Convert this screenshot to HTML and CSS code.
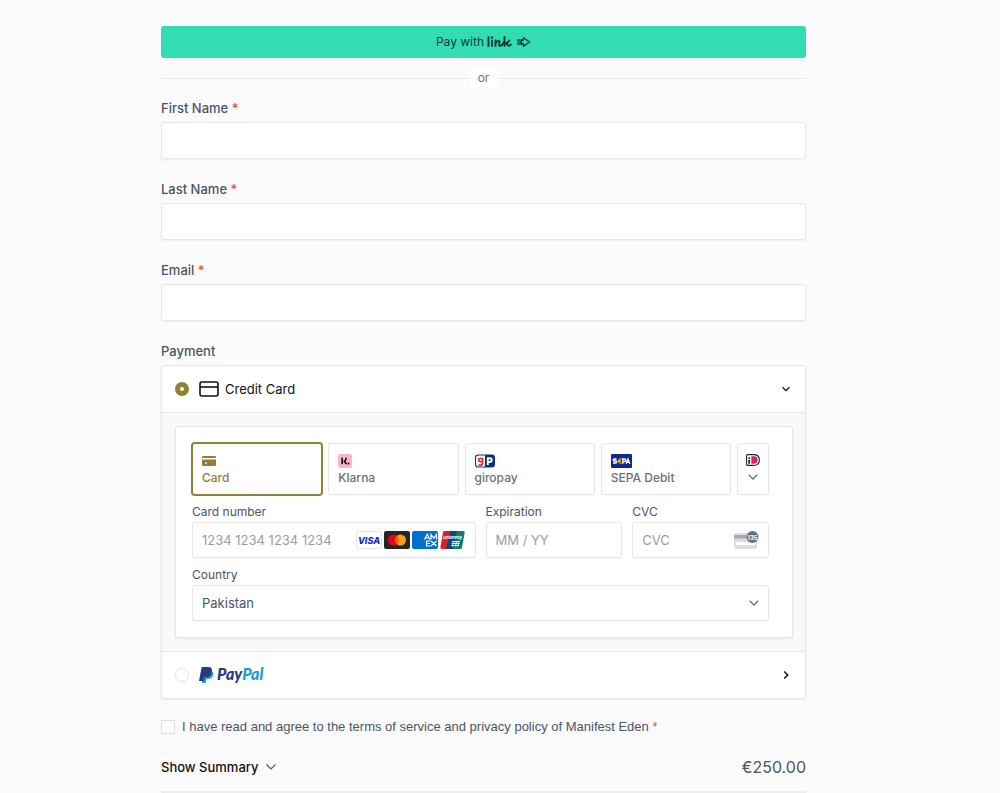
FILE: index.html
```html
<!DOCTYPE html>
<html lang="en">
<head>
    <meta charset="UTF-8">
    <meta name="viewport" content="width=device-width, initial-scale=1.0">
    <title>Checkout</title>
    <link rel="stylesheet" href="styles.css">
</head>
<body>

    <form class="checkout">
        <button type="button" class="link-button" aria-label="Pay with link">
            <span>Pay with</span>
            <svg width="44" height="14" viewBox="0 0 44 14">
                <g fill="none" stroke="#0b3b35" stroke-width="1.900" stroke-linecap="round" stroke-linejoin="round">
                    <path d="M1.500 2v9M5 5.500V11M8.500 11V5.500M8.500 8.500c1.200-2.500 4.300-4.200 4-1.500-.2 1.800-.8 4 .5 4 1.500 0 3-2 3.800-4M17.500 2v9M18 8.500c2-.3 3.500-1.300 4.200-3M19.500 8.300c.8.800 1 2.500 2.400 2.500.9 0 1.400-.5 1.900-1.300"/>
                </g>
                <circle cx="5" cy="2.500" r="1.200" fill="#0b3b35"/>
                <path d="M29.500 5l1-1h6.500v6h-6.500l-1-1 1.200-2z" fill="#0b3b35" opacity=".65"/>
                <path d="M36.500 2.800l6 4.200-6 4.200V9h-2V5h2z" fill="#33ddb3" stroke="#0b3b35" stroke-width="1.400" stroke-linejoin="round"/>
            </svg>
        </button>

        <div class="divider"><span>or</span></div>

        <div class="field">
            <label for="firstName">First Name <span class="required">*</span></label>
            <input type="text" id="firstName" required>
        </div>
        <div class="field">
            <label for="lastName">Last Name <span class="required">*</span></label>
            <input type="text" id="lastName" required>
        </div>
        <div class="field">
            <label for="email">Email <span class="required">*</span></label>
            <input type="email" id="email" required>
        </div>

        <div class="payment-title">Payment</div>
        <div class="payment">
            <div class="method">
                <input type="radio" class="radio" id="payCard" name="method" checked>
                <label for="payCard">
                    <svg width="20" height="16" viewBox="0 0 20 16" fill="none" stroke="#111" stroke-width="1.600">
                        <rect x="1" y="1" width="18" height="14" rx="2"/>
                        <path d="M1 6h18"/>
                    </svg>
                    Credit Card
                </label>
                <svg class="chevron" width="10" height="10" viewBox="0 0 10 10" fill="none" stroke="#111" stroke-width="1.300">
                    <path d="M1.500 3.200L5 6.700l3.500-3.500"/>
                </svg>
            </div>

            <div class="method-body">
                <div class="card-panel">
                    <div class="tabs">
                        <button type="button" class="tab active">
                            <svg width="14" height="14" viewBox="0 0 14 14" fill="#8f8033">
                                <path d="M0 3.200Q0 2 1.200 2h11.600Q14 2 14 3.200V4H0z"/>
                                <path d="M0 5.500h14v5.300q0 1.200-1.200 1.200H1.200Q0 12 0 10.800zM3 8.500v1.300h2V8.500z" fill-rule="evenodd"/>
                            </svg>
                            <span>Card</span>
                        </button>
                        <button type="button" class="tab">
                            <svg width="14" height="14" viewBox="0 0 14 14">
                                <rect width="14" height="14" rx="2" fill="#feb4c7"/>
                                <path d="M3.300 3.800H5v6.500H3.300zM7.300 3.800H9c0 1.400-.6 2.500-1.600 3.300l2.200 3.200H7.500L5.200 7.100c1.300-.8 2.100-1.900 2.100-3.300z" fill="#17120f"/>
                                <circle cx="10.600" cy="9.500" r=".9" fill="#17120f"/>
                            </svg>
                            <span>Klarna</span>
                        </button>
                        <button type="button" class="tab">
                            <svg width="20" height="14" viewBox="0 0 20 14">
                                <rect y=".5" width="20" height="13" rx="3" fill="#0a3270"/>
                                <path d="M3.500 1.500H10v11H3.500Q1 12.500 1 10V4Q1 1.500 3.500 1.500z" fill="#fff"/>
                                <path d="M7.500 3.700v5.800q0 1.600-1.600 1.600H3.500M7.300 4.500H5Q3.700 4.500 3.700 6T5 7.700h2.300" fill="none" stroke="#e3272e" stroke-width="1.700"/>
                                <path d="M12.800 11V4.200h2q2 0 2 1.900t-2 1.900h-2" fill="none" stroke="#fff" stroke-width="1.900"/>
                            </svg>
                            <span>giropay</span>
                        </button>
                        <button type="button" class="tab">
                            <svg width="21" height="14" viewBox="0 0 21 14">
                                <rect width="21" height="14" rx="1" fill="#10298e"/>
                                <g fill="none" stroke="#fff" stroke-width="1.400">
                                    <path d="M5.500 5H3.300Q2.200 5 2.200 6T3.300 7h1.300q1.100 0 1.100 1T4.600 9H2"/>
                                    <path d="M11.800 9.700V5h1.500q1.300 0 1.300 1.300t-1.300 1.300h-1.500M15 9.700L16.900 5l1.900 4.700M15.800 8.300h2.400"/>
                                </g>
                                <path d="M10.600 4.800Q7.600 4 7.600 7t3 2.200M6.600 6.400h3.400M6.600 7.700h3.200" fill="none" stroke="#ffbe00" stroke-width="1"/>
                            </svg>
                            <span>SEPA Debit</span>
                        </button>
                        <button type="button" class="tab more" aria-label="More payment methods">
                            <svg width="14" height="12" viewBox="0 0 14 12">
                                <path d="M1.700.6h5.800Q13.400.6 13.400 6t-5.900 5.400H1.700q-1.100 0-1.100-1V1.600q0-1 1.100-1z" fill="#fff" stroke="#222" stroke-width="1.100"/>
                                <path d="M5.300 2.300h2.500Q11.700 2.300 11.700 6t-3.900 3.700H5.300z" fill="#e0206f"/>
                                <circle cx="3.200" cy="4.200" r="1" fill="#222"/>
                                <path d="M2.300 6h1.800v3.700H2.300z" fill="#222"/>
                            </svg>
                            <svg width="10" height="6" viewBox="0 0 10 6" fill="none" stroke="#6d6e78" stroke-width="1.300">
                                <path d="M.8.800L5 5 9.200.800"/>
                            </svg>
                        </button>
                    </div>

                    <div class="card-fields">
                        <div class="card-field wide">
                            <label for="cardNumber">Card number</label>
                            <div class="card-input">
                                <input type="text" id="cardNumber" placeholder="1234 1234 1234 1234">
                                <span class="brands">
                                    <svg width="26" height="18" viewBox="0 0 26 18">
                                        <rect x=".5" y=".5" width="25" height="17" rx="2" fill="#fff" stroke="#e3e5e8"/>
                                        <text x="13" y="12.500" text-anchor="middle" class="brand-visa">VISA</text>
                                    </svg>
                                    <svg width="26" height="18" viewBox="0 0 26 18">
                                        <rect width="26" height="18" rx="2" fill="#252525"/>
                                        <circle cx="9.500" cy="9" r="5.500" fill="#eb001b"/>
                                        <circle cx="16.500" cy="9" r="5.500" fill="#f79e1b"/>
                                        <path d="M13 4.800a5.500 5.500 0 0 1 0 8.400 5.500 5.500 0 0 1 0-8.400z" fill="#ff5f00"/>
                                    </svg>
                                    <svg width="26" height="18" viewBox="0 0 26 18">
                                        <rect width="26" height="18" rx="2" fill="#016fd0"/>
                                        <path d="M12.500 8.500l2.700-5.300 2.700 5.300M13.700 7h3M19 8.500V3.500l2.800 3.700 2.700-3.700v5M18.500 10h-4v5h4M14.500 12.500h3.700M19 10l5.500 5M24.500 10L19 15" fill="none" stroke="#fff" stroke-width="1.200"/>
                                    </svg>
                                    <svg width="26" height="18" viewBox="0 0 26 18">
                                        <path d="M4 0h7L7 18H2Q0 18 .4 16L3 1.500Q3.200 0 4 0z" fill="#d8232a"/>
                                        <path d="M10 0h8l-4 18H6z" fill="#17477a"/>
                                        <path d="M17 0h6.500Q25 0 24.700 1.500L22 16.500q-.3 1.500-1.800 1.500H13z" fill="#0f7a78"/>
                                        <text x="3" y="8" class="brand-union">UnionPay</text>
                                        <path d="M12 10.500h8M11.500 12.500h8M11 14.500h8M13.500 10l-1 5.500M16.500 10l-1 5.500M19 10l-1 5.500" fill="none" stroke="#fff" stroke-width=".8"/>
                                    </svg>
                                </span>
                            </div>
                        </div>
                        <div class="card-field">
                            <label for="expiry">Expiration</label>
                            <div class="card-input">
                                <input type="text" id="expiry" placeholder="MM / YY">
                            </div>
                        </div>
                        <div class="card-field">
                            <label for="cvc">CVC</label>
                            <div class="card-input">
                                <input type="text" id="cvc" placeholder="CVC">
                                <svg width="26" height="20" viewBox="0 0 26 20">
                                    <rect x="1" y="3" width="23" height="16" rx="2" fill="#dcdde0"/>
                                    <path d="M1 5h23v3.500H1z" fill="#a9aaaf"/>
                                    <path d="M3 12h19v3H3z" fill="#fff"/>
                                    <circle cx="19.500" cy="7" r="6" fill="#6d6e78"/>
                                    <text x="19.500" y="9.500" text-anchor="middle" class="cvc-digits">135</text>
                                </svg>
                            </div>
                        </div>
                        <div class="card-field full">
                            <label for="country">Country</label>
                            <div class="card-input">
                                <select id="country">
                                    <option selected>Pakistan</option>
                                </select>
                                <svg width="10" height="6" viewBox="0 0 10 6" fill="none" stroke="#6d6e78" stroke-width="1.300">
                                    <path d="M.8.800L5 5 9.200.800"/>
                                </svg>
                            </div>
                        </div>
                    </div>
                </div>
            </div>

            <div class="method">
                <input type="radio" class="radio" id="payPaypal" name="method">
                <label for="payPaypal" aria-label="PayPal">
                    <svg width="68" height="18" viewBox="0 0 68 18">
                        <path d="M5 4.500h6.500q3.300.8 2.600 4.300-.9 4.200-5.400 4.200H7.400L6.500 17H3z" fill="#179bd7"/>
                        <path d="M2.700 1h6.500q4.400 0 3.700 4.200-.8 4.600-5.500 4.600H5L4 15H0z" fill="#253b80"/>
                        <path d="M5.500 11h3.200q3.400-.4 4.200-5.500-.8 4.300-5.500 4.300H5.200L4.200 15h.7z" fill="#222d65"/>
                        <text x="18" y="13.500" class="brand-paypal"><tspan fill="#253b80">Pay</tspan><tspan fill="#179bd7">Pal</tspan></text>
                    </svg>
                </label>
                <svg class="chevron" width="10" height="10" viewBox="0 0 10 10" fill="none" stroke="#111" stroke-width="1.500">
                    <path d="M3.200 1.500L6.700 5 3.200 8.500"/>
                </svg>
            </div>
        </div>

        <div class="terms">
            <input type="checkbox" id="terms" required>
            <label for="terms">I have read and agree to the terms of service and privacy policy of Manifest Eden <span class="required">*</span></label>
        </div>

        <div class="summary">
            <button type="button" class="summary-toggle">
                Show Summary
                <svg width="10" height="6" viewBox="0 0 10 6" fill="none" stroke="#4b5563" stroke-width="1.100">
                    <path d="M.5.500L5 5 9.500.500"/>
                </svg>
            </button>
            <span class="total">€250.00</span>
        </div>
    </form>

</body>
</html>
```
FILE: styles.css
```css
* {
    box-sizing: border-box;
}
body {
    font-family: Inter, "Liberation Sans", sans-serif;
    font-size: 13px;
    line-height: 20px;
    margin: 0;
    color: #4b5563;
    background-color: #fbfbfb;
}
button, input, select {
    font: inherit;
    color: inherit;
    margin: 0;
}
svg {
    display: block;
    flex-shrink: 0;
}
.checkout {
    padding: 26px 194px 0 161px;
}
.link-button {
    display: flex;
    align-items: center;
    justify-content: center;
    gap: 3px;
    width: 100%;
    height: 32px;
    padding: 0;
    border: none;
    border-radius: 3px;
    background: #33ddb3;
    color: #0b3b35;
    font-size: 12px;
    cursor: pointer;
}
.divider {
    display: flex;
    align-items: center;
    height: 20px;
    margin: 10px 0;
    font-size: 12px;
    color: #6b7280;
}
.divider::before, .divider::after {
    content: "";
    flex: 1;
    border-top: 1px solid #e9eaec;
}
.divider span {
    padding: 0 8px;
    background: white;
}
.field {
    margin-bottom: 20px;
}
.field label, .payment-title {
    display: block;
    margin-bottom: 4px;
    font-weight: 500;
}
.field input {
    display: block;
    width: 100%;
    height: 37px;
    padding: 0 10px;
    border: 1px solid #e5e7eb;
    border-radius: 3px;
    background: white;
    box-shadow: 0 1px 2px rgba(0, 0, 0, 0.06);
}
.required {
    color: #ef4444;
}
.payment {
    border: 1px solid #e5e7eb;
    border-radius: 3px;
    background: white;
    box-shadow: 0 1px 2px rgba(0, 0, 0, 0.08);
}
.method {
    display: flex;
    align-items: center;
    height: 46px;
    padding: 0 14px 0 13px;
}
.method label {
    display: flex;
    align-items: center;
    gap: 6px;
    margin-left: 10px;
    color: #111;
}
.radio {
    appearance: none;
    width: 14px;
    height: 14px;
    border: 1px solid #dfe2e6;
    border-radius: 50%;
    background: white;
}
.radio:checked {
    border: 5px solid #8f8033;
}
.chevron {
    margin-left: auto;
}
.method-body {
    padding: 13px 12px 13px 13px;
    border-top: 1px solid #e5e7eb;
    border-bottom: 1px solid #e5e7eb;
    background: #f8f9fb;
}
.card-panel {
    padding: 16px 23px 16px 16px;
    border: 1px solid #e5e7eb;
    border-radius: 3px;
    background: white;
    box-shadow: 0 1px 2px rgba(0, 0, 0, 0.08);
}
.tabs {
    display: flex;
    gap: 6px;
}
.tab {
    display: flex;
    flex: 1;
    flex-direction: column;
    justify-content: center;
    align-items: flex-start;
    gap: 2px;
    height: 52px;
    padding: 2px 9px 0;
    border: 1px solid #e6e6e6;
    border-radius: 3px;
    background: white;
    box-shadow: 0 1px 2px rgba(0, 0, 0, 0.04);
    color: #6d6e78;
    font-size: 12px;
    font-weight: 500;
    line-height: 16px;
    cursor: pointer;
}
.tab.active {
    border-color: #8f8033;
    box-shadow: 0 0 0 1px #8f8033;
    color: #8f8033;
}
.tab.more {
    flex: 0 0 32px;
    align-items: center;
    gap: 8px;
    padding: 0 0 4px;
}
.card-fields {
    display: grid;
    grid-template-columns: repeat(4, 1fr);
    gap: 9px 10px;
    margin-top: 9px;
}
.card-field.wide {
    grid-column: span 2;
}
.card-field.full {
    grid-column: span 4;
}
.card-field label {
    display: block;
    margin-bottom: 2px;
    font-size: 12px;
    line-height: 16px;
}
.card-input {
    display: flex;
    align-items: center;
    height: 36px;
    padding: 0 9px;
    border: 1px solid #e6e6e6;
    border-radius: 3px;
    background: white;
    box-shadow: 0 1px 2px rgba(0, 0, 0, 0.04);
}
.card-input input, .card-input select {
    flex: 1;
    width: 0;
    padding: 0;
    border: none;
    outline: none;
    background: transparent;
    appearance: none;
}
.card-input input::placeholder {
    color: #9a9ca5;
}
.brands {
    display: flex;
    gap: 2px;
}
.brand-visa {
    font-size: 9px;
    font-weight: 800;
    font-style: italic;
    fill: #1a1fc7;
}
.brand-union {
    font-size: 4px;
    font-weight: 700;
    font-style: italic;
    fill: white;
}
.brand-paypal {
    font-family: Lato, sans-serif;
    font-size: 16px;
    font-weight: 900;
    font-style: italic;
}
.cvc-digits {
    font-size: 6px;
    font-weight: 700;
    fill: white;
}
.terms {
    display: flex;
    align-items: center;
    gap: 7px;
    margin-top: 18px;
    font-family: "Liberation Sans", Arial, sans-serif;
}
.terms input {
    appearance: none;
    width: 14px;
    height: 14px;
    border: 1px solid #dfe2e6;
    background: white;
}
.summary {
    display: flex;
    align-items: center;
    justify-content: space-between;
    margin-top: 6px;
    padding: 14px 0;
    border-bottom: 2px solid #ededed;
}
.summary-toggle {
    display: flex;
    align-items: center;
    gap: 7px;
    padding: 0;
    border: none;
    background: none;
    color: #111;
    font-weight: 500;
    cursor: pointer;
}
.total {
    font-size: 16px;
    font-weight: 400;
}
```
